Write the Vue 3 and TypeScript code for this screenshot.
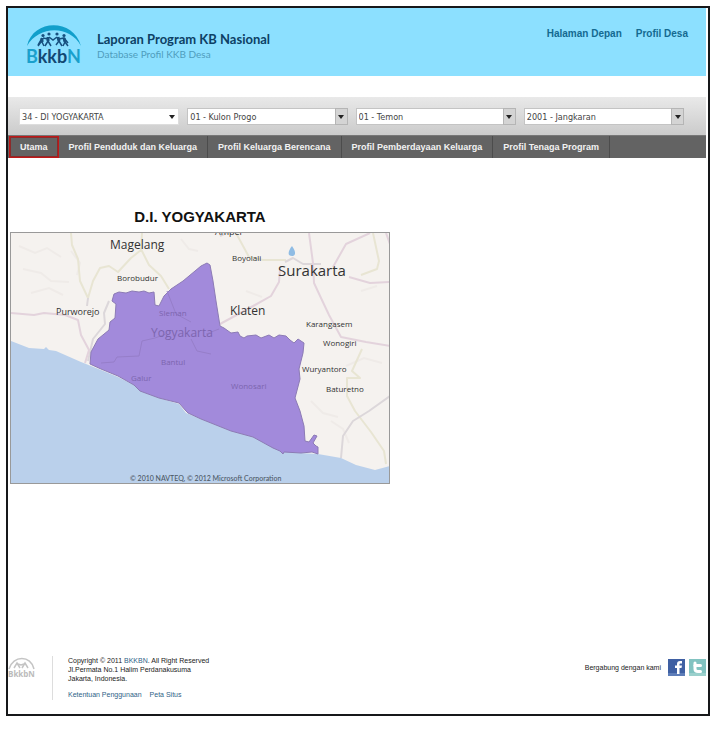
<script setup lang="ts">
import { ref } from 'vue'

interface Region {
  id: string
  label: string
  value: string
  flat?: boolean
}

interface Place {
  name: string
  x: number
  y: number
  size: number
  inside?: boolean
}

const regions = ref<Region[]>([
  { id: 'provinsi', label: 'Provinsi', value: '34 - DI YOGYAKARTA', flat: true },
  { id: 'kabupaten', label: 'Kabupaten', value: '01 - Kulon Progo' },
  { id: 'kecamatan', label: 'Kecamatan', value: '01 - Temon' },
  { id: 'desa', label: 'Desa', value: '2001 - Jangkaran' },
])

const tabs: string[] = [
  'Utama',
  'Profil Penduduk dan Keluarga',
  'Profil Keluarga Berencana',
  'Profil Pemberdayaan Keluarga',
  'Profil Tenaga Program',
]
const activeTab = ref('Utama')

const places: Place[] = [
  { name: 'Ampel', x: 214, y: 234, size: 9 },
  { name: 'Magelang', x: 109, y: 248, size: 12 },
  { name: 'Boyolali', x: 231, y: 260, size: 8 },
  { name: 'Borobudur', x: 116, y: 280, size: 8 },
  { name: 'Surakarta', x: 277, y: 275, size: 15 },
  { name: 'Purworejo', x: 55, y: 314, size: 9 },
  { name: 'Klaten', x: 229, y: 314, size: 12 },
  { name: 'Karangasem', x: 305, y: 326, size: 8 },
  { name: 'Wonogiri', x: 322, y: 345, size: 8 },
  { name: 'Wuryantoro', x: 301, y: 371, size: 8 },
  { name: 'Baturetno', x: 325, y: 391, size: 8 },
  { name: 'Sleman', x: 158, y: 315, size: 8, inside: true },
  { name: 'Yogyakarta', x: 150, y: 336, size: 12, inside: true },
  { name: 'Bantul', x: 160, y: 364, size: 8, inside: true },
  { name: 'Galur', x: 130, y: 380, size: 8, inside: true },
  { name: 'Wonosari', x: 230, y: 388, size: 8, inside: true },
]
</script>

<template>
  <div class="frame">
    <header class="banner">
      <svg class="logo" viewBox="0 0 56 42" role="img" aria-label="BkkbN">
        <path class="arc" d="M1 22C7-5 47-6 55 22C44 1 13 1 1 22Z" />
        <g class="people">
          <circle cx="17" cy="11.500" r="1.600" /><circle cx="23" cy="10" r="1.600" />
          <circle cx="31" cy="10" r="1.600" /><circle cx="38" cy="11.500" r="1.600" />
          <path d="M16 14L12 21M16 14L15 18L12 22M16 18L18 22M17 14L22 15M22 13L22 17L19 22M22 17L25 22M23 13L27 16L31 13M31 13L33 17L30 21M33 17L36 22M33 15L38 14L39 18L37 22M39 18L42 22M38 14L42 19" />
          <path class="torso" d="M16 14L16 18M22 13L22 17M32 13L33 17M38 14L39 18" />
        </g>
        <text class="logo-text" x="0" y="39"><tspan class="cyan">B</tspan>kkb<tspan class="cyan">N</tspan></text>
      </svg>
      <div class="brand">
        <strong>Laporan Program KB Nasional</strong>
        <span>Database Profil KKB Desa</span>
      </div>
      <nav class="top-links">
        <a href="#depan">Halaman Depan</a>
        <a href="#desa">Profil Desa</a>
      </nav>
    </header>

    <form class="filters">
      <div v-for="r in regions" :key="r.id" class="picker" :class="{ flat: r.flat }">
        <select :id="r.id" v-model="r.value" :aria-label="r.label">
          <option :value="r.value">{{ r.value }}</option>
        </select>
        <span class="arrow"><svg viewBox="0 0 6 4"><path d="M0 0H6L3 4Z" /></svg></span>
      </div>
    </form>

    <nav class="tabs">
      <button
        v-for="t in tabs"
        :key="t"
        type="button"
        :class="{ active: t === activeTab }"
        @click="activeTab = t"
      >{{ t }}</button>
    </nav>

    <main>
      <figure>
        <figcaption>D.I. YOGYAKARTA</figcaption>
        <svg class="map" viewBox="10 232 378 250">
          <rect x="10" y="232" width="380" height="252" fill="#f5f2ef" />
          <g class="relief">
            <path d="M18 245l16 7 12-5 14 9M22 268l18 4 10 8 18 1M30 292l18-5 14 7M70 250l9 12-3 12M180 238l8 10 9 2M310 400l12 12 15 4M330 420l12 8 6 14M345 365l18-8 18 5M245 290l16 6M360 290l16-5" />
          </g>
          <g class="road yellow">
            <path d="M70 232L71 244L77 258L79 280L87 297L92 280L99 267L108 265L117 271L130 257L140 249L141 232M140 248L148 264L160 275L168 288M235 232L248 256L262 259L285 259M372 232L378 260L376 268L360 274M361 348L351 370L359 377L346 377L346 395L354 410L370 431L383 450L385 463" />
          </g>
          <g class="road grey">
            <path d="M87 297L86 305M108 300L103 312L104 323L92 338L87 360M340 457L342 435L352 420L368 410L389 395M219 235L230 230M284 261L292 257L302 263L320 263" />
          </g>
          <g class="road pink">
            <path d="M10 312L33 314L43 312L64 314L77 319L80 334L88 349L84 362M308 232L312 262L313 282L320 297L328 314L340 336L365 341L389 345M332 266L345 243L369 232M348 276L369 282L389 281M219 323L232 316L254 304L270 295L278 281L279 268M385 232L389 243" />
          </g>
          <path class="sea" d="M10 340L28 347L43 348L45 346L48 349L55 350L80 361L100 369L117 376L133 384L139 390L158 397L178 403L185 412L200 418L230 430L252 436L277 449L300 452L317 453L340 457L355 464L374 469L389 465V484H10Z" />
          <path class="province" d="M89 363L90 351L97 338L108 329L109 321L114 317L115 303L111 300L113 293L118 291L125 292L131 290L138 291L143 290L148 292L153 291L154 304L158 305L163 295L170 288L182 280L200 265L206 262L209 264L212 280L215 300L219 325L223 327L230 332L237 331L239 335L243 337L246 335L255 334L260 337L268 334L273 337L278 334L285 335L289 339L293 342L297 338L303 342L302 352L298 368L299 378L294 397L299 410L303 425L304 440L308 441L313 434L316 435L312 442L315 445L317 446L317 453L311 451L300 452L283 451L282 453L279 450L272 447L252 436L230 430L200 418L187 412L185 410L178 402L158 397L139 390L133 384L117 375L100 368Z" />
          <path class="inner" d="M100 362L113 361L116 356L138 355L141 340L154 337L165 333M205 333L218 328M166 290L175 313L190 321M190 338L196 350L210 353" />
          <path class="drop" d="M291 245C296 252 294 255 291 255C286 255 287 250 291 245Z" />
          <text
            v-for="p in places"
            :key="p.name"
            :x="p.x"
            :y="p.y"
            :font-size="p.size"
            :class="{ inside: p.inside }"
          >{{ p.name }}</text>
          <text class="credit" x="129" y="480" font-size="7">© 2010 NAVTEQ, © 2012 Microsoft Corporation</text>
        </svg>
      </figure>
    </main>

    <footer>
      <svg class="seal" viewBox="0 0 27 22" role="img" aria-label="BkkbN">
        <path d="M1 11C5-3 23-3 26 11M6 10L9 5L12 10M10 6L13 7L16 6M14 10L17 5L20 10" />
        <text x="0" y="19">BkkbN</text>
      </svg>
      <div class="legal">
        <p>Copyright © 2011 <a href="#bkkbn">BKKBN</a>. All Right Reserved<br>Jl.Permata No.1 Halim Perdanakusuma<br>Jakarta, Indonesia.</p>
        <p class="links"><a href="#ketentuan">Ketentuan Penggunaan</a><a href="#peta">Peta Situs</a></p>
      </div>
      <div class="social">
        <span>Bergabung dengan kami</span>
        <a href="#facebook" aria-label="Facebook">
          <svg viewBox="0 0 17 17"><rect width="17" height="17" fill="#3f60a3" /><rect y="14" width="17" height="3" fill="#5d7db8" /><path d="M9 15V9H7V6.500H9V5C9 3 10 2 12 2H14V4.500H12.500C12 4.500 11.500 4.800 11.500 5.500V6.500H14L13.500 9H11.500V15Z" fill="#fff" /></svg>
        </a>
        <a href="#twitter" aria-label="Twitter">
          <svg viewBox="0 0 17 17"><rect width="17" height="17" fill="#82c3c1" /><rect y="14" width="17" height="3" fill="#9bd0cc" /><path d="M6 4V10C6 12 7 12.500 9 12.500H11.500" fill="none" stroke="#fff" stroke-width="3" stroke-linecap="round" /><path d="M6 6.500H11.500" stroke="#fff" stroke-width="3" stroke-linecap="round" /></svg>
        </a>
      </div>
    </footer>
  </div>
</template>

<style>
body {
  background: #fff;
}
</style>

<style scoped>
* {
  box-sizing: border-box;
}
.frame {
  display: flex;
  flex-direction: column;
  min-height: calc(100vh - 19px);
  margin: 6px 6px 13px;
  padding-right: 2px;
  border: 2px solid #17181a;
  font-family: "Liberation Sans", Arial, sans-serif;
}
a {
  text-decoration: none;
}
.banner {
  display: flex;
  height: 68px;
  margin-bottom: 21px;
  padding: 16px 18px 0;
  background: #8ce0ff;
}
.logo {
  width: 56px;
  height: 42px;
  overflow: visible;
}
.arc {
  fill: #119fcb;
}
.people {
  fill: #17507f;
}
.people path {
  fill: none;
  stroke: #17507f;
  stroke-width: 1.500;
}
.people .torso {
  stroke-width: 3;
}
.logo-text {
  font: 700 18px Lato, sans-serif;
  fill: #124873;
}
.logo-text .cyan {
  fill: #1aa0cc;
}
.brand {
  display: flex;
  flex-direction: column;
  margin-left: 15px;
  padding-top: 7px;
  font-family: Lato, sans-serif;
  font-size: 10px;
  line-height: 14px;
  color: #4f9dbd;
}
.brand strong {
  font-size: 13px;
  line-height: 16px;
  color: #0d4165;
}
.top-links {
  display: flex;
  gap: 14px;
  margin-left: auto;
  font-size: 10px;
  font-weight: 700;
  line-height: 20px;
}
.top-links a {
  color: #146a91;
}
.filters {
  display: flex;
  gap: 8px;
  height: 38px;
  padding: 11px 22px 0 11px;
  background: linear-gradient(#e9e9e9, #cbcbcb);
}
.picker {
  display: grid;
  flex: 1;
  max-width: 161px;
  height: 17px;
}
.picker select {
  grid-area: 1 / 1;
  width: 100%;
  height: 17px;
  padding: 0 16px 0 2px;
  border: 1px solid #c4c4c4;
  border-radius: 0;
  appearance: none;
  background: #fff;
  font: 9px "DejaVu Sans Condensed", "Open Sans", sans-serif;
  color: #444;
}
.arrow {
  grid-area: 1 / 1;
  display: grid;
  place-items: center;
  justify-self: end;
  width: 13px;
  height: 17px;
  border: 1px solid #b5b5b5;
  background: #d4d4d4;
  pointer-events: none;
}
.arrow svg {
  width: 6px;
  height: 4px;
  fill: #222;
}
.flat select,
.flat .arrow {
  border-color: #ddd;
  background: #fff;
}
.flat .arrow {
  border-left: 0;
}
.tabs {
  display: flex;
  height: 23px;
  background: #636363;
  border-top: 1px solid #777;
}
.tabs button {
  padding: 0 10px;
  border: 0;
  border-right: 1px solid #4c4c4c;
  background: none;
  font: 700 9px/20px "Liberation Sans", Arial, sans-serif;
  color: #f2f2f2;
}
.tabs .active {
  margin-left: 1px;
  border: 1px solid #c01818;
  outline: 1px solid #8c2a2a;
  outline-offset: -2px;
}
main {
  flex: 1;
  padding: 48px 2px 0;
}
figure {
  max-width: 380px;
  margin: 0;
}
figcaption {
  padding-bottom: 4px;
  font-size: 15px;
  font-weight: 700;
  line-height: 22px;
  text-align: center;
  color: #111;
}
.map {
  display: block;
  width: 100%;
  border: 1px solid #999;
  font-family: "Open Sans", sans-serif;
  font-weight: 500;
  fill: #333;
}
.map path {
  fill: none;
}
.relief {
  stroke: #efebe8;
  stroke-width: 2;
}
.road {
  stroke-width: 2;
  stroke-linejoin: round;
}
.yellow {
  stroke: #e8e5d3;
}
.grey {
  stroke: #dcd7da;
}
.pink {
  stroke: #e3d3dc;
}
.map .sea {
  fill: #bad0eb;
}
.map .province {
  fill: #a28adb;
  stroke: #8c7bb5;
}
.inner {
  stroke: #967ec9;
  stroke-width: 1;
}
.map .drop {
  fill: #8fbce4;
}
.inside {
  fill: #7c65ae;
}
.credit {
  font-family: Lato, sans-serif;
  fill: #4c5866;
}
footer {
  display: flex;
  align-items: flex-start;
  padding: 0 0 14px;
  font-size: 7px;
  line-height: 9px;
  color: #222;
}
.seal {
  width: 27px;
  height: 22px;
  margin-top: 2px;
  overflow: visible;
}
.seal path {
  fill: none;
  stroke: #c4c4c4;
  stroke-width: 1.500;
}
.seal text {
  font: 700 8px "Open Sans", sans-serif;
  fill: #bbb;
}
.legal {
  margin-left: 17px;
  padding: 0 0 1px 15px;
  border-left: 1px solid #ddd;
}
.legal p {
  margin: 0;
}
.legal a {
  color: #2f5f87;
}
.legal .links {
  display: flex;
  gap: 8px;
  padding: 7px 0 0;
}
.social {
  display: flex;
  align-items: center;
  gap: 4px;
  margin: 3px 0 0 auto;
}
.social span {
  margin-right: 3px;
}
.social a,
.social svg {
  display: block;
  width: 17px;
  height: 17px;
}
</style>
